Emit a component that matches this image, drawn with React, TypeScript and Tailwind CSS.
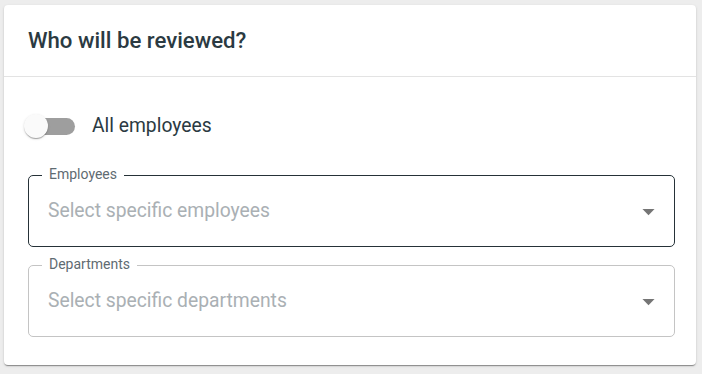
import React, { useState } from 'react';

const ArrowDrop = () => (
  <svg className="w-[29px] h-[29px]" viewBox="0 0 24 24" fill="#757575">
    <path d="M7 10l5 5 5-5z" />
  </svg>
);

interface SelectFieldProps {
  label: string;
  placeholder: string;
  focused?: boolean;
}

const SelectField: React.FC<SelectFieldProps> = ({ label, placeholder, focused }) => (
  <div
    className={`relative h-[72px] rounded-[5px] border flex items-center pl-[19px] pr-[11px] ${
      focused ? 'border-[#263238]' : 'border-[#c4c4c4]'
    }`}
  >
    <span className="absolute left-[13px] -top-[11px] px-[7px] bg-white text-[14px] leading-[19px] text-[#5f6b72]">
      {label}
    </span>
    <span className="flex-1 text-[19.3px] text-[#aab0b4]">{placeholder}</span>
    <ArrowDrop />
  </div>
);

export default function App() {
  const [allEmployees, setAllEmployees] = useState(false);

  return (
    <div className="w-[702px] h-[374px] bg-[#ededed] pt-[5px] pl-[4px]" style={{ fontFamily: 'Roboto, "Liberation Sans", sans-serif' }}>
      <div className="w-[692px] h-[360px] bg-white rounded-[4px] shadow-[0_2px_1px_-1px_rgba(0,0,0,0.25),0_1px_1px_0_rgba(0,0,0,0.16),0_1px_3px_0_rgba(0,0,0,0.12)]">
        <div className="h-[72px] flex items-center px-[24px] border-b border-[#e3e3e3]">
          <h2 className="text-[22.2px] font-medium text-[#2b3a42]">Who will be reviewed?</h2>
        </div>

        <div className="pt-[37px] pl-[24px] pr-[21px]">
          <div className="flex items-center h-[24px] gap-[16px]">
            <button
              onClick={() => setAllEmployees(!allEmployees)}
              className="relative w-[52px] h-[24px] shrink-0 -ml-[4px]"
            >
              <span className="absolute left-[10px] top-[4px] w-[41px] h-[17px] rounded-full bg-[#9e9e9e]" />
              <span className="absolute left-0 top-0 w-[24px] h-[24px] rounded-full bg-[#fafafa] shadow-[0_2px_1px_-1px_rgba(0,0,0,0.2),0_1px_1px_0_rgba(0,0,0,0.14),0_1px_3px_0_rgba(0,0,0,0.12)]" />
            </button>
            <span className="text-[19.3px] text-[#2b3a42]">All employees</span>
          </div>

          <div className="mt-[37px] flex flex-col gap-[18px]">
            <SelectField label="Employees" placeholder="Select specific employees" focused />
            <SelectField label="Departments" placeholder="Select specific departments" />
          </div>
        </div>
      </div>
    </div>
  );
}
